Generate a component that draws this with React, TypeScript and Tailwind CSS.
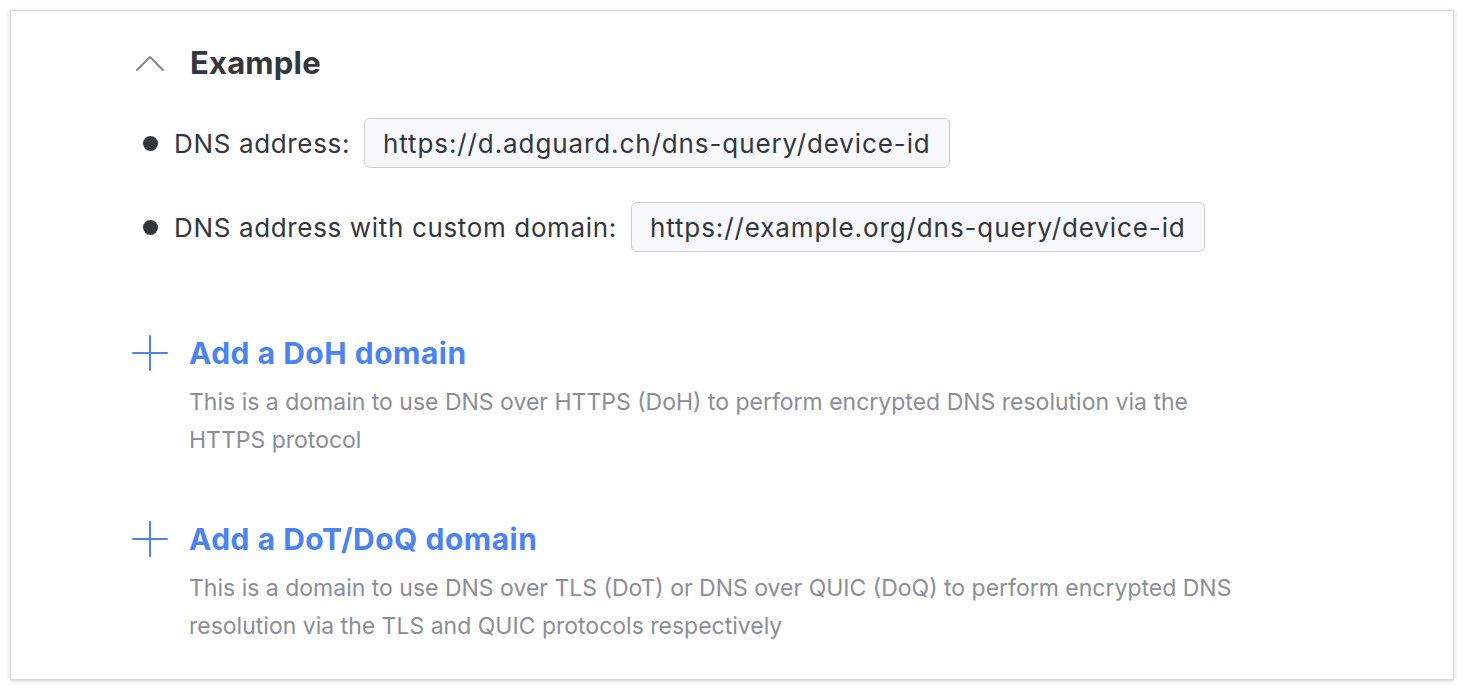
const rows = [
  { label: "DNS address:", value: "https://d.adguard.ch/dns-query/device-id" },
  {
    label: "DNS address with custom domain:",
    value: "https://example.org/dns-query/device-id",
  },
];

const domains = [
  {
    title: "Add a DoH domain",
    text: "This is a domain to use DNS over HTTPS (DoH) to perform encrypted DNS resolution via the HTTPS protocol",
  },
  {
    title: "Add a DoT/DoQ domain",
    text: "This is a domain to use DNS over TLS (DoT) or DNS over QUIC (DoQ) to perform encrypted DNS resolution via the TLS and QUIC protocols respectively",
  },
];

const PlusIcon = () => (
  <svg width="36" height="36" viewBox="0 0 36 36" fill="none" className="shrink-0">
    <path
      d="M18 1 V35 M1 18 H35"
      stroke="#4d84ec"
      strokeWidth="2"
      strokeLinecap="round"
    />
  </svg>
);

export default function App() {
  return (
    <div className="min-h-screen bg-white p-[10px] font-['Inter',sans-serif]">
      <div className="h-[670px] border border-[#d9d9d9] bg-white pl-[121px] pt-[30px] shadow-[0_1px_4px_rgba(0,0,0,0.18)]">
        {/* Example header */}
        <div className="flex h-[44px] items-center">
          <svg width="36" height="36" viewBox="0 0 36 36" fill="none" className="mr-[22px]">
            <path
              d="M5 25 L18 12 L31 25"
              stroke="#85888d"
              strokeWidth="2"
              strokeLinecap="round"
              strokeLinejoin="round"
            />
          </svg>
          <h2 className="text-[31px] font-bold tracking-[0.2px] text-[#33363b]">Example</h2>
        </div>

        <ul className="mt-[33px] flex flex-col gap-[34px]">
          {rows.map((r) => (
            <li key={r.label} className="flex items-center text-[26px] text-[#33363b]">
              <span className="ml-[11px] mr-[16px] h-[15px] w-[15px] rounded-full bg-[#33363b]" />
              <span className="tracking-[0.65px]">{r.label}</span>
              <span className="ml-[14px] flex h-[50px] items-center rounded-[6px] border border-[#cdd0d5] bg-[#f7f8fa] px-[18px] tracking-[0.9px]">
                {r.value}
              </span>
            </li>
          ))}
        </ul>

        <div className="mt-[80px] flex flex-col gap-[59px]">
          {domains.map((d) => (
            <div key={d.title} className="flex">
              <div className="mt-[3px] mr-[21px]">
                <PlusIcon />
              </div>
              <div>
                <h3 className="flex h-[42px] items-center text-[30px] font-bold tracking-[0.5px] text-[#4d84ec]">
                  {d.title}
                </h3>
                <p className="mt-[9px] max-w-[1060px] text-[23px] leading-[38px] text-[#8b8e94]">
                  {d.text}
                </p>
              </div>
            </div>
          ))}
        </div>
      </div>
    </div>
  );
}
